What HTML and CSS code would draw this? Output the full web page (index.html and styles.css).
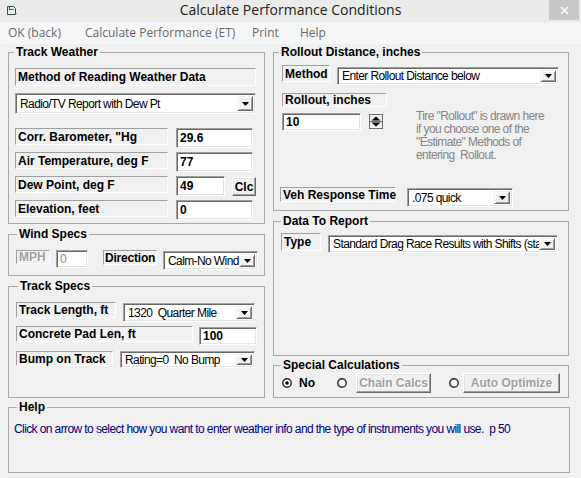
FILE: index.html
```html
<!DOCTYPE html>
<html>
<head>
<meta charset="utf-8">
<link rel="stylesheet" href="styles.css">
</head>
<body>
<div class="window">
  <div class="titlebar">
    <svg class="app-icon" width="10" height="9" viewBox="0 0 10 9"><path d="M0.5 0.5H6.5L8.5 2.5V8.5H0.5Z M2.5 0.5V3.5H6.5" fill="none" stroke="#34553a" stroke-width="1"/><path d="M8 6L9.5 7.5" stroke="#34553a" stroke-width="1"/></svg>
    <div class="title">Calculate Performance Conditions</div>
    <div class="close"><svg width="9" height="9" viewBox="0 0 9 9"><path d="M1 1L8 8M8 1L1 8" stroke="#fff" stroke-width="1.4"/></svg></div>
  </div>
  <div class="menubar">
    <span class="mi m1">OK (back)</span>
    <span class="mi m2">Calculate Performance (ET)</span>
    <span class="mi m3">Print</span>
    <span class="mi m4">Help</span>
  </div>
  <div class="client">
    <div class="columns">
      <div class="col left">
        <fieldset class="grp tw">
          <legend>Track Weather</legend>
          <div class="body">
            <div class="lbl method-lbl">Method of Reading Weather Data</div>
            <div class="sel tw-sel"><span class="st">Radio/TV Report with Dew Pt</span><span class="arrow"><svg width="7" height="4" viewBox="0 0 7 4"><path d="M0 0H7L3.5 4Z" fill="#000"/></svg></span></div>
            <div class="row r1"><div class="lbl w-tw">Corr. Barometer, "Hg</div><div class="inp w-in">29.6</div></div>
            <div class="row"><div class="lbl w-tw">Air Temperature, deg F</div><div class="inp w-in">77</div></div>
            <div class="row"><div class="lbl w-tw">Dew Point, deg F</div><div class="inp w-dew">49</div><div class="btn clc">Clc</div></div>
            <div class="row"><div class="lbl w-tw">Elevation, feet</div><div class="inp w-in">0</div></div>
          </div>
        </fieldset>
        <fieldset class="grp wind">
          <legend>Wind Specs</legend>
          <div class="body">
            <div class="row">
              <div class="lbl mph dis">MPH</div>
              <div class="inp mph-in dis-in">0</div>
              <div class="lbl dir">Direction</div>
              <div class="sel dir-sel"><span class="st">Calm-No Wind</span><span class="arrow"><svg width="7" height="4" viewBox="0 0 7 4"><path d="M0 0H7L3.5 4Z" fill="#000"/></svg></span></div>
            </div>
          </div>
        </fieldset>
        <fieldset class="grp track">
          <legend>Track Specs</legend>
          <div class="body">
            <div class="row">
              <div class="lbl tl">Track Length, ft</div>
              <div class="sel tl-sel"><span class="st">1320&nbsp; Quarter Mile</span><span class="arrow"><svg width="7" height="4" viewBox="0 0 7 4"><path d="M0 0H7L3.5 4Z" fill="#000"/></svg></span></div>
            </div>
            <div class="row r2">
              <div class="lbl cp">Concrete Pad Len, ft</div>
              <div class="inp cp-in">100</div>
            </div>
            <div class="row r3">
              <div class="lbl bt">Bump on Track</div>
              <div class="sel bt-sel"><span class="st">Rating=0&nbsp; No Bump</span><span class="arrow"><svg width="7" height="4" viewBox="0 0 7 4"><path d="M0 0H7L3.5 4Z" fill="#000"/></svg></span></div>
            </div>
          </div>
        </fieldset>
      </div>
      <div class="col right">
        <fieldset class="grp rollout">
          <legend>Rollout Distance, inches</legend>
          <div class="body">
            <div class="row">
              <div class="lbl meth">Method</div>
              <div class="sel meth-sel"><span class="st">Enter Rollout Distance below</span><span class="arrow"><svg width="7" height="4" viewBox="0 0 7 4"><path d="M0 0H7L3.5 4Z" fill="#000"/></svg></span></div>
            </div>
            <div class="mid">
              <div class="ro-left">
                <div class="lbl ro-lbl">Rollout, inches</div>
                <div class="ro-row">
                  <div class="inp ro-in">10</div>
                  <svg class="spin" width="14" height="15" viewBox="0 0 14 15"><rect x="0.5" y="0.5" width="13" height="14" fill="#f0f0f0" stroke="#6e6e6e"/><path d="M7 2.5L11.5 6.5H2.5Z" fill="#000"/><path d="M1 7.5H13" stroke="#6e6e6e"/><path d="M2.5 8.5H11.5L7 12.5Z" fill="#000"/></svg>
                </div>
              </div>
              <div class="tire">Tire "Rollout" is drawn here<br>if you choose one of the<br>"Estimate" Methods of<br>entering&nbsp; Rollout.</div>
            </div>
            <div class="row">
              <div class="lbl veh">Veh Response Time</div>
              <div class="sel veh-sel"><span class="st">.075 quick</span><span class="arrow"><svg width="7" height="4" viewBox="0 0 7 4"><path d="M0 0H7L3.5 4Z" fill="#000"/></svg></span></div>
            </div>
          </div>
        </fieldset>
        <fieldset class="grp data">
          <legend>Data To Report</legend>
          <div class="body">
            <div class="row">
              <div class="lbl type">Type</div>
              <div class="sel type-sel"><span class="st">Standard Drag Race Results with Shifts (standard)</span><span class="arrow"><svg width="7" height="4" viewBox="0 0 7 4"><path d="M0 0H7L3.5 4Z" fill="#000"/></svg></span></div>
            </div>
          </div>
        </fieldset>
        <fieldset class="grp special">
          <legend>Special Calculations</legend>
          <div class="body">
            <div class="row sp-row">
              <svg class="radio" width="10" height="10" viewBox="0 0 10 10"><circle cx="5" cy="5" r="4.2" fill="#fff" stroke="#2a2a2a" stroke-width="1.4"/><circle cx="5" cy="5" r="1.8" fill="#000"/></svg>
              <span class="rlabel">No</span>
              <svg class="radio r2" width="10" height="10" viewBox="0 0 10 10"><circle cx="5" cy="5" r="4.2" fill="#fff" stroke="#2a2a2a" stroke-width="1.4"/></svg>
              <div class="btn disb chain">Chain Calcs</div>
              <svg class="radio r3" width="10" height="10" viewBox="0 0 10 10"><circle cx="5" cy="5" r="4.2" fill="#fff" stroke="#2a2a2a" stroke-width="1.4"/></svg>
              <div class="btn disb auto">Auto Optimize</div>
            </div>
          </div>
        </fieldset>
      </div>
    </div>
    <fieldset class="grp help">
      <legend>Help</legend>
      <div class="body">
        <div class="helptext">Click on arrow to select how you want to enter weather info and the type of instruments you will use.&nbsp; p 50</div>
      </div>
    </fieldset>
  </div>
</div>
</body>
</html>
```
FILE: styles.css
```css
* { box-sizing: border-box; }
body { margin: 0; background: #f0f0f0; font-family: "Liberation Sans", Arial, sans-serif; color: #000; }
.window { width: 581px; height: 478px; background: #f0f0f0; overflow: hidden; }

.titlebar { height: 22px; background: #ebebeb; display: grid; grid-template-columns: 1fr auto 1fr; align-items: start; }
.app-icon { margin: 6px 0 0 7px; }
.title { font-family: "Open Sans", "Noto Sans", sans-serif; font-size: 14px; line-height: 20px; color: #222; }
.close { justify-self: end; width: 30px; height: 20px; margin-right: 2px; background: #c7c7c7; display: flex; align-items: center; justify-content: center; }

.menubar { height: 22px; background: #f5f6f7; display: flex; font-family: "Open Sans", "Noto Sans", sans-serif; font-size: 12px; line-height: 22px; color: #6a6a6a; }
.mi { padding-left: 8px; white-space: nowrap; }
.m1 { width: 77px; }
.m2 { width: 167px; }
.m3 { width: 48px; }

.client { padding: 1px 0 0 8px; }
.columns { display: flex; gap: 8px; }
.col { display: flex; flex-direction: column; }
.left { width: 257px; }
.right { width: 296px; }

.grp { margin: 0; padding: 0; border: 1px solid #a9a9a9; min-width: 0; }
.grp legend { font-weight: bold; font-size: 12px; line-height: 14px; padding: 0 2px; margin-left: 5px; }

.lbl { border: 1px solid; border-color: #a0a0a0 #fff #fff #a0a0a0; font-weight: bold; font-size: 12px; padding-left: 2px; display: flex; align-items: center; white-space: nowrap; }
.sel { background: #fff; border: 1px solid; border-color: #a0a0a0 #fff #fff #a0a0a0; box-shadow: inset 1px 1px 0 #696969, inset -1px -1px 0 #e3e3e3; padding: 2px; display: flex; align-items: center; font-size: 12px; letter-spacing: -0.6px; overflow: hidden; }
.sel .st { flex: 1; min-width: 0; padding-left: 2px; white-space: nowrap; overflow: hidden; text-overflow: clip; }
.arrow { flex: none; width: 16px; align-self: stretch; background: #f0f0f0; border: 1px solid; border-color: #f0f0f0 #696969 #696969 #f0f0f0; box-shadow: inset 1px 1px 0 #fff, inset -1px -1px 0 #a0a0a0; display: flex; align-items: center; justify-content: center; }
.inp { background: #fff; border: 1px solid; border-color: #a0a0a0 #fff #fff #a0a0a0; box-shadow: inset 1px 1px 0 #696969, inset -1px -1px 0 #e3e3e3; font-weight: bold; font-size: 12px; padding-left: 3px; display: flex; align-items: center; }
.btn { background: #f0f0f0; border: 1px solid; border-color: #fff #696969 #696969 #fff; box-shadow: inset -1px -1px 0 #a0a0a0, inset 1px 1px 0 #e3e3e3; font-weight: bold; font-size: 12px; display: flex; align-items: center; justify-content: center; }
.row { display: flex; align-items: flex-start; height: 20px; }

/* Track Weather */
.tw .body { padding: 9px 0 3px 6px; }
.method-lbl { width: 241px; height: 18px; }
.tw-sel { width: 241px; height: 21px; margin-top: 7px; }
.tw .row { margin-top: 4px; }
.tw .row.r1 { margin-top: 14px; }
.w-tw { width: 153px; height: 17px; }
.w-in { width: 77px; height: 20px; margin-left: 8px; }
.w-dew { width: 49px; height: 20px; margin-left: 8px; }
.clc { width: 24px; height: 19px; margin: 1px 0 0 7px; }

/* Wind */
.wind { margin-top: 3px; }
.wind legend { margin-left: 8px; }
.wind .body { padding: 9px 0 5px 7px; }
.mph { width: 34px; height: 14px; }
.dis { color: #a0a0a0; text-shadow: 1px 1px 0 #fff; }
.mph-in { width: 32px; height: 18px; margin-left: 6px; }
.dis-in { color: #8a8a8a; font-weight: normal; }
.dir { width: 54px; height: 15px; margin-left: 15px; padding-left: 1px; letter-spacing: -0.2px; }
.dir-sel { width: 95px; height: 19px; margin: 1px 0 0 6px; }

/* Track */
.track { margin-top: 3px; flex: 1; }
.track legend { margin-left: 9px; }
.track .body { padding: 9px 0 0 7px; }
.tl { width: 100px; height: 16px; }
.tl-sel { width: 132px; height: 19px; margin: 1px 0 0 7px; }
.track .r2 { margin-top: 4px; }
.cp { width: 177px; height: 16px; }
.cp-in { width: 58px; height: 18px; margin: 1px 0 0 6px; }
.track .r3 { margin-top: 5px; }
.bt { width: 97px; height: 15px; }
.bt-sel { width: 135px; height: 17px; margin-left: 7px; }

/* Rollout */
.rollout .body { padding: 6px 0 3px 8px; }
.meth { width: 48px; height: 17px; }
.meth-sel { width: 222px; height: 18px; margin: 2px 0 0 7px; }
.mid { height: 94px; margin-top: 8px; display: flex; }
.ro-lbl { width: 105px; height: 14px; }
.ro-row { display: flex; align-items: flex-start; margin-top: 6px; }
.ro-in { width: 79px; height: 18px; }
.spin { margin: 1px 0 0 8px; }
.tire { margin-left: 29px; padding-top: 17px; font-size: 12px; letter-spacing: -0.6px; line-height: 13px; color: #858585; white-space: nowrap; }
.veh { width: 116px; height: 15px; margin-left: -2px; }
.veh-sel { width: 106px; height: 19px; margin: 1px 0 0 11px; }

/* Data */
.data { margin-top: 3px; }
.data legend { margin-left: 7px; }
.data .body { height: 127px; padding: 5px 0 0 7px; }
.type { width: 40px; height: 18px; }
.type-sel { width: 230px; height: 18px; margin: 2px 0 0 7px; }

/* Special */
.special { margin-top: 2px; }
.special legend { margin-left: 7px; }
.special .body { padding: 1px 0 4px 8px; }
.sp-row { align-items: center; }
.rlabel { font-weight: bold; font-size: 12px; margin-left: 7px; }
.radio.r2 { margin-left: 22px; }
.chain { width: 75px; height: 20px; margin-left: 9px; }
.radio.r3 { margin-left: 18px; }
.auto { width: 97px; height: 20px; margin-left: 4px; }
.disb { color: #a0a0a0; text-shadow: 1px 1px 0 #fff; }

/* Help */
.help { width: 562px; margin-top: 2px; }
.help legend { margin-left: 8px; }
.help .body { height: 58px; padding: 9px 0 0 5px; }
.helptext { font-size: 12px; letter-spacing: -0.6px; line-height: 13px; color: #000080; white-space: nowrap; }
```
